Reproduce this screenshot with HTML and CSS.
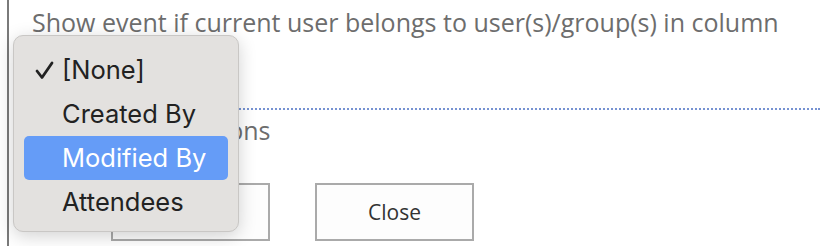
FILE: index.html
```html
<!DOCTYPE html>
<html lang="en">
<head>
<meta charset="UTF-8">
<meta name="viewport" content="width=device-width, initial-scale=1.0">
<title>Event filter</title>
<link rel="stylesheet" href="styles.css">
</head>
<body>

<div class="panel">
    <p class="label">Show event if current user belongs to user(s)/group(s) in column</p>
    <div class="field"></div>
    <div class="divider"></div>
    <p class="section">Appearance Options</p>
    <div class="buttons">
        <button class="btn">OK</button>
        <button class="btn">Close</button>
    </div>
</div>

<ul class="menu">
    <li class="item">
        <svg class="check" width="20" height="20" viewBox="0 0 20 20">
            <polyline points="2,10 7,16.5 17,2" fill="none" stroke="#222" stroke-width="2.8" stroke-linecap="round" stroke-linejoin="round"/>
        </svg>[None]</li>
    <li class="item">Created By</li>
    <li class="item active">Modified By</li>
    <li class="item">Attendees</li>
</ul>

</body>
</html>
```

FILE: styles.css
```css
body {
    margin: 0;
    background-color: #fff;
    font-family: "Open Sans", Arial, sans-serif;
    overflow: hidden;
}
.panel {
    margin-left: 7px;
    height: 246px;
    border-left: 2px solid #7a7a7a;
    padding-left: 23px;
}
.label {
    margin: 0;
    padding-top: 5px;
    font-size: 25px;
    line-height: 34px;
    color: #6d6d6d;
    white-space: nowrap;
}
.field {
    height: 69px;
}
.divider {
    border-top: 2px dotted #7692d2;
}
.section {
    margin: 3px 0 0 0;
    font-size: 25px;
    line-height: 34px;
    color: #6d6d6d;
}
.buttons {
    display: flex;
    gap: 45px;
    margin-top: 36px;
    margin-left: 79px;
}
.btn {
    width: 159px;
    height: 58px;
    border: 2px solid #aaa;
    background-color: #fdfdfd;
    font-family: "Open Sans", Arial, sans-serif;
    font-size: 21px;
    color: #333;
    padding: 0;
}
.menu {
    position: absolute;
    left: 13px;
    top: 35px;
    width: 226px;
    height: 197px;
    margin: 0;
    padding: 12px 10px 8px 10px;
    box-sizing: border-box;
    list-style: none;
    background-color: #e3e1df;
    border: 1px solid #c9c7c5;
    border-radius: 10px;
    box-shadow: 0 4px 18px rgba(0, 0, 0, 0.18);
    font-family: Inter, "Noto Sans", sans-serif;
    font-size: 25.5px;
    color: #222;
}
.menu .item {
    position: relative;
    height: 44px;
    line-height: 44px;
    padding-left: 38px;
    border-radius: 5px;
}
.menu .item.active {
    background-color: #659cf7;
    color: #fff;
}
.menu .check {
    position: absolute;
    left: 11px;
    top: 13px;
}
```
